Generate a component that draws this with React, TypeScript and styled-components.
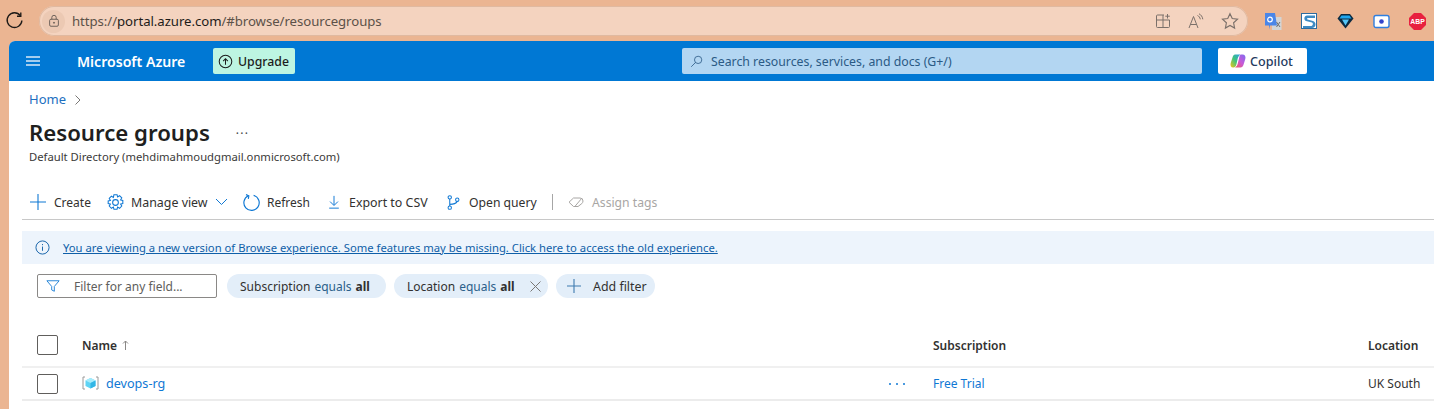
import React from "react";
import styled, { createGlobalStyle } from "styled-components";

const Global = createGlobalStyle`
  html, body { margin: 0; padding: 0; background: #ebb592; overflow: hidden; }
  body { font-family: "Noto Sans", "Open Sans", "Liberation Sans", sans-serif; width: 1434px; height: 409px; }
  * { box-sizing: border-box; }
`;

const Page = styled.div`
  width: 1434px;
  height: 409px;
  overflow: hidden;
  display: flex;
  flex-direction: column;
`;
const BrowserBar = styled.div`
  height: 41px;
  flex: none;
  display: flex;
  align-items: flex-start;
  padding: 6px 0 0 5px;
`;
const Reload = styled.div`
  width: 19px;
  height: 19px;
  margin: 5px 15px 0 0;
  display: flex;
`;
const AddressBar = styled.div`
  width: 1209px;
  height: 30px;
  border-radius: 15px;
  background: #f4d3bf;
  box-shadow: 0 0 0 1px #e0b9a0 inset;
  display: flex;
  align-items: center;
  padding: 0 9px 0 3px;
`;
const LockWrap = styled.div`
  width: 23px;
  height: 23px;
  border-radius: 50%;
  background: #ecc9b3;
  display: flex;
  align-items: center;
  justify-content: center;
  margin-right: 7px;
`;
const Url = styled.div`
  font-size: 13.2px;
  color: #5c5148;
  flex: 1;
  letter-spacing: -0.05px;
  white-space: nowrap;
  b { font-weight: 400; color: #1d1b19; }
`;
const BarIcons = styled.div`
  display: flex;
  align-items: center;
  gap: 17px;
`;
const Extensions = styled.div`
  display: flex;
  align-items: center;
  margin-left: 17px;
  gap: 19px;
  height: 30px;
`;
const Ext = styled.div`
  width: 17px;
  height: 17px;
  display: flex;
  align-items: center;
  justify-content: center;
`;
const Win = styled.div`
  flex: 1;
  margin-left: 9px;
  background: #fff;
  border-top-left-radius: 6px;
  overflow: hidden;
  display: flex;
  flex-direction: column;
`;
const Header = styled.header`
  height: 40px;
  flex: none;
  background: #0078d4;
  display: flex;
  align-items: center;
  padding-left: 17px;
`;
const Burger = styled.div`
  width: 14px;
  height: 10px;
  border-top: 2px solid #a4cdee;
  border-bottom: 2px solid #a4cdee;
  margin-right: 37px;
  &::after {
    content: "";
    display: block;
    height: 2px;
    margin-top: 2px;
    background: #a4cdee;
  }
`;
const Brand = styled.div`
  color: #fff;
  font-size: 14.1px;
  font-weight: 600;
  width: 136px;
  white-space: nowrap;
`;
const Upgrade = styled.div`
  width: 82px;
  height: 26px;
  background: #bdf5e2;
  border-radius: 2px;
  display: flex;
  align-items: center;
  gap: 5px;
  padding-left: 5px;
  font-size: 12.3px;
  font-weight: 500;
  color: #1c1c1c;
`;
const Search = styled.div`
  width: 520px;
  height: 26px;
  margin-left: 387px;
  background: #b3d6f2;
  border-radius: 2px;
  display: flex;
  align-items: center;
  gap: 8px;
  padding-left: 8px;
  font-size: 12.3px;
  color: #2b5a85;
  white-space: nowrap;
`;
const Copilot = styled.div`
  width: 89px;
  height: 26px;
  margin-left: 16px;
  padding-right: 2px;
  background: #fff;
  border-radius: 2px;
  display: flex;
  align-items: center;
  justify-content: center;
  gap: 4px;
  font-size: 12.6px;
  font-weight: 500;
  color: #243a5e;
`;
const Content = styled.main`
  flex: 1;
  padding-left: 13px;
  display: flex;
  flex-direction: column;
`;
const Crumb = styled.div`
  height: 35px;
  padding: 9px 0 0 7px;
  display: flex;
  align-items: flex-start;
  gap: 8px;
  font-size: 13px;
  color: #1d6fbf;
`;
const Title = styled.h1`
  margin: 0;
  padding-left: 7px;
  height: 33px;
  display: flex;
  align-items: center;
  font-size: 22.2px;
  line-height: 33px;
  font-weight: 600;
  color: #201f1e;
  white-space: nowrap;
`;
const TitleMore = styled.span`
  margin-left: 26px;
  font-size: 12px;
  font-weight: 400;
  letter-spacing: 1.2px;
  color: #444;
  position: relative;
  top: 1px;
`;
const Sub = styled.div`
  margin-top: 1px;
  padding-left: 7px;
  height: 17px;
  font-size: 11.25px;
  line-height: 14px;
  color: #3b3a39;
  white-space: nowrap;
`;
const Toolbar = styled.div`
  margin-top: 19px;
  height: 34px;
  border-bottom: 1px solid #c8c8c8;
  display: flex;
  align-items: center;
  padding: 0 0 1px 8px;
  color: #323130;
  white-space: nowrap;
`;
const Tool = styled.div<{ $w: number; $gap?: number; $off?: boolean; $size?: number }>`
  width: ${(p) => p.$w}px;
  flex: none;
  display: flex;
  align-items: center;
  font-size: ${(p) => p.$size ?? 12}px;
  gap: ${(p) => p.$gap ?? 8}px;
  color: ${(p) => (p.$off ? "#a8a6a4" : "#323130")};
`;
const Divider = styled.div`
  width: 1px;
  height: 16px;
  background: #a6a6a6;
  margin-right: 15px;
`;
const Banner = styled.div`
  margin-top: 11px;
  height: 33px;
  background: #edf4fc;
  display: flex;
  align-items: center;
  gap: 13px;
  padding-left: 13px;
  font-size: 11.25px;
  white-space: nowrap;
  a { color: #0f5fa8; text-decoration: underline; }
`;
const FilterRow = styled.div`
  margin-top: 10px;
  height: 24px;
  display: flex;
  align-items: center;
  padding-left: 15px;
`;
const FilterInput = styled.div`
  width: 180px;
  height: 24px;
  border: 1px solid #8a8886;
  border-radius: 2px;
  display: flex;
  align-items: center;
  gap: 14px;
  padding-left: 8px;
  font-size: 12px;
  color: #605e5c;
  margin-right: 10px;
  white-space: nowrap;
`;
const Pill = styled.div<{ $w: number; $size?: number }>`
  width: ${(p) => p.$w}px;
  height: 24px;
  margin-right: 8px;
  border-radius: 12px;
  background: #e3eef9;
  display: flex;
  align-items: center;
  padding-left: 13px;
  font-size: ${(p) => p.$size ?? 12}px;
  color: #323130;
  white-space: nowrap;
  em { font-style: normal; color: #2b5f8a; margin: 0 4px; }
  b { font-weight: 700; }
`;
const PillClose = styled.span`
  margin-left: 15px;
  display: flex;
`;
const Grid = styled.div`
  display: grid;
  grid-template-columns: 45px 851px 435px 1fr;
  align-items: center;
  padding-left: 15px;
  white-space: nowrap;
`;
const HeadRow = styled(Grid)`
  margin-top: 26px;
  height: 44px;
  border-bottom: 2px solid #f0f0f0;
  font-size: 12px;
  font-weight: 600;
  color: #323130;
`;
const DataRow = styled(Grid)`
  height: 33px;
  border-bottom: 2px solid #ececec;
  font-size: 12px;
  color: #323130;
`;
const Check = styled.div`
  width: 21px;
  height: 20px;
  border: 1px solid #605e5c;
  border-radius: 2px;
`;
const NameHead = styled.div`
  display: flex;
  align-items: center;
  gap: 5px;
`;
const NameCell = styled.div`
  display: flex;
  align-items: center;
  justify-content: space-between;
  padding-right: 28px;
`;
const RowLink = styled.a<{ $size?: number }>`
  color: #0f78d4;
  font-size: ${(p) => p.$size ?? 12}px;
  display: flex;
  align-items: center;
  gap: 7px;
`;
const RowMore = styled.span`
  display: flex;
  gap: 5px;
  i { width: 2px; height: 2px; background: #0f78d4; display: block; border-radius: 50%; }
`;

const Svg = (p: { w: number; h?: number; c: string; sw?: number; children: React.ReactNode }) => (
  <svg width={p.w} height={p.h ?? p.w} viewBox="0 0 16 16" fill="none" stroke={p.c} strokeWidth={p.sw ?? 1} style={{ flex: "none", display: "block" }}>
    {p.children}
  </svg>
);

export default function App() {
  return (
    <Page>
      <Global />
      <BrowserBar>
        <Reload>
          <Svg w={19} c="#1e1b18" sw={1.15}>
            <path d="M12.9 3.9A6.2 6.2 0 1 0 14.2 8" />
            <path d="M13.3 1.2v3.2h-3.2" />
          </Svg>
        </Reload>
        <AddressBar>
          <LockWrap>
            <Svg w={14} c="#5f5650">
              <rect x="3" y="6" width="10" height="8" rx="1.5" />
              <path d="M5.5 6V4a2.500 2.500 0 0 1 5 0v2" />
              <circle cx="8" cy="10" r="0.6" fill="#5f5650" />
            </Svg>
          </LockWrap>
          <Url>
            https://<b>portal.azure.com</b>/#browse/resourcegroups
          </Url>
          <BarIcons>
            <Svg w={16} c="#7b706a">
              <path d="M9 2H2.500a1 1 0 0 0-1 1v10.500a1 1 0 0 0 1 1h11a1 1 0 0 0 1-1V7H1.500M8 2v12.500" />
              <path d="M12.500 1v4.500M10.300 3.200h4.500" />
            </Svg>
            <Svg w={16} c="#7b706a">
              <path d="M1 15 5.500 3.500 10 15M2.500 11.500h6" />
              <path d="M9.500 2.500c1.500.6 2.500 2 2.800 3.800M11 .8c2 .9 3.500 3 3.800 5.500" />
            </Svg>
            <Svg w={18} c="#7b706a">
              <path d="m8 1.500 2 4.300 4.700.6-3.500 3.200.9 4.700L8 12l-4.100 2.300.9-4.700L1.300 6.400 6 5.800z" />
            </Svg>
          </BarIcons>
        </AddressBar>
        <Extensions>
          <Ext>
            <svg width="17" height="17" viewBox="0 0 17 17" style={{ display: "block" }}>
              <rect x="7" y="4" width="9.500" height="13" fill="#d3d5d6" />
              <path d="M0 0h10l2 12.500H5v4l-1-4H0z" fill="#4a86e8" />
              <circle cx="5" cy="6.500" r="2.300" fill="none" stroke="#fff" strokeWidth="1.200" />
              <path d="m11.500 9 3.500 5M15 9l-3.500 5" stroke="#6b7074" strokeWidth="1" />
            </svg>
          </Ext>
          <Ext>
            <svg width="17" height="17" viewBox="0 0 17 17" style={{ display: "block" }}>
              <rect width="16" height="16" fill="#2d6c9f" />
              <rect x="1" y="1" width="14" height="14" fill="#fff" />
              <path d="M14 2.500H6C3 2.500 2.500 7 5 8l6 1.500c1.500.5 1 3-.5 3.500H2V15h9c4 0 5-5.500 1-7L6.500 6.500c-1-.5-.5-1.500.5-1.500h7z" fill="#3d8bc4" />
            </svg>
          </Ext>
          <Ext>
            <svg width="17" height="17" viewBox="0 0 17 17" style={{ display: "block" }}>
              <path d="M4 1h9l3.500 4.500L8.500 15.500.5 5.500z" fill="#0c2a40" />
              <path d="M4.500 2.500h8l2 3H2.500z" fill="#1ea7f0" />
              <path d="M5 6.500h7l-3.500 6z" fill="#54c5f8" />
            </svg>
          </Ext>
          <Ext>
            <svg width="17" height="17" viewBox="0 0 17 17" style={{ display: "block" }}>
              <rect x="1" y="2.500" width="15" height="12" rx="2" fill="#fff" stroke="#2f7fe0" strokeWidth="1.400" />
              <circle cx="8.500" cy="8.500" r="2.300" fill="#3344cc" />
            </svg>
          </Ext>
          <Ext>
            <svg width="17" height="17" viewBox="0 0 17 17" style={{ display: "block" }}>
              <path d="M5 0h7l5 5v7l-5 5H5l-5-5V5z" fill="#e8213f" />
              <text x="8.500" y="11" textAnchor="middle" fontFamily="Liberation Sans, sans-serif" fontWeight="700" fontSize="6.800" fill="#fff">ABP</text>
            </svg>
          </Ext>
        </Extensions>
      </BrowserBar>
      <Win>
        <Header>
          <Burger />
          <Brand>Microsoft Azure</Brand>
          <Upgrade>
            <Svg w={15} c="#1c1c1c" sw={1.1}>
              <circle cx="8" cy="8" r="6.700" />
              <path d="M8 11.500V5M5.500 7.500 8 5l2.500 2.500" />
            </Svg>
            Upgrade
          </Upgrade>
          <Search>
            <Svg w={13} c="#2b5a85">
              <circle cx="10" cy="6" r="4.500" />
              <path d="M6.800 9.200 1.500 14.500" />
            </Svg>
            Search resources, services, and docs (G+/)
          </Search>
          <Copilot>
            <svg width="16" height="16" viewBox="0 0 16 16" style={{ flex: "none", display: "block" }}>
              <defs>
                <linearGradient id="cpa" x1="0" y1="1" x2="1" y2="0">
                  <stop offset="0" stopColor="#f5c518" />
                  <stop offset="0.5" stopColor="#3fc47a" />
                  <stop offset="1" stopColor="#2f9bea" />
                </linearGradient>
                <linearGradient id="cpb" x1="0" y1="1" x2="1" y2="0">
                  <stop offset="0" stopColor="#ef5a5a" />
                  <stop offset="0.5" stopColor="#c85ad8" />
                  <stop offset="1" stopColor="#7a6cf0" />
                </linearGradient>
              </defs>
              <path d="M5 1.500h5.500c-2 1-2.500 3-3 5L6.500 11c-.5 2-1.500 3.500-3 3.500H3c-2 0-3-2-2.300-4.500L2.500 4.500C3 2.500 4 1.500 5 1.500z" fill="url(#cpa)" />
              <path d="M11 1.500h1.500c2.300 0 3.500 2 2.800 4.500l-1.700 5.500c-.6 2-1.600 3-3.100 3H5c2 -1 2.500 -3 3 -5l1.200-5c.4-1.800 .8-3 1.800-3z" fill="url(#cpb)" />
            </svg>
            Copilot
          </Copilot>
        </Header>
        <Content>
          <Crumb>
            Home
            <svg width="8" height="12" viewBox="0 0 8 12" fill="none" stroke="#797775" style={{ marginTop: 4 }}>
              <path d="m1.500 1.500 4.500 4.500-4.500 4.500" />
            </svg>
          </Crumb>
          <Title>
            Resource groups<TitleMore>···</TitleMore>
          </Title>
          <Sub>Default Directory (mehdimahmoudgmail.onmicrosoft.com)</Sub>
          <Toolbar>
            <Tool $w={77}>
              <Svg w={16} c="#0f78d4" sw={1.1}>
                <path d="M8 0v16M0 8h16" />
              </Svg>
              Create
            </Tool>
            <Tool $w={136} $gap={7} $size={12.4}>
              <svg width="17" height="17" viewBox="1.500 1.500 13 13" fill="none" stroke="#0f78d4" strokeWidth="0.800" style={{ flex: "none", display: "block" }}>
                <circle cx="8" cy="8" r="2.200" />
                <path d="M6.800 2h2.400l.4 1.700 1.500-.9 1.700 1.700-.9 1.500 1.700.4v2.400l-1.700.4.9 1.500-1.700 1.700-1.500-.9-.4 1.700H6.800l-.4-1.700-1.500.9-1.700-1.700.9-1.500-1.700-.4V6.800l1.700-.4-.9-1.500 1.700-1.700 1.500.9z" />
              </svg>
              Manage view
              <svg width="13" height="8" viewBox="0 0 13 8" fill="none" stroke="#0f78d4">
                <path d="m1 1 5.500 5.500L12 1" />
              </svg>
            </Tool>
            <Tool $w={84} $gap={7}>
              <Svg w={17} c="#0f78d4" sw={1.1}>
                <path d="M10 1.300A7.200 7.200 0 1 1 5 1.700" />
                <path d="M2.800 0.600 5.500 1.700 5 4.500" />
              </Svg>
              Refresh
            </Tool>
            <Tool $w={119} $gap={8} $size={12.4}>
              <Svg w={14} c="#0f78d4" sw={1.1}>
                <path d="M8 1v10.500M3.500 7.500 8 12l4.500-4.500M2.500 15h11" />
              </Svg>
              Export to CSV
            </Tool>
            <Tool $w={106} $size={12.2}>
              <Svg w={15} c="#0f78d4" sw={1.100}>
                <circle cx="4" cy="2.500" r="1.800" />
                <circle cx="4" cy="13.500" r="1.800" />
                <circle cx="12" cy="5" r="1.800" />
                <path d="M4 4.300v7.400M4 10c3 0 6.500-.5 8-3.200" />
              </Svg>
              Open query
            </Tool>
            <Divider />
            <Tool $w={110} $off $size={12.2}>
              <Svg w={16} c="#a8a6a4">
                <path d="M5.500 4H12a3 3 0 0 1 3 3c0 1-.5 2-1.200 2.600L10 12.500H5.500L1 8.200z" />
                <path d="M14 4 7 12.300" />
              </Svg>
              Assign tags
            </Tool>
          </Toolbar>
          <Banner>
            <Svg w={15} c="#0f5fa8">
              <circle cx="8" cy="8" r="7" />
              <path d="M8 7v4.500M8 4.300v1.200" />
            </Svg>
            <a>You are viewing a new version of Browse experience. Some features may be missing. Click here to access the old experience.</a>
          </Banner>
          <FilterRow>
            <FilterInput>
              <Svg w={14} c="#0f78d4">
                <path d="M1 2h14L9.500 8.500V14l-3-1.500v-4z" />
              </Svg>
              Filter for any field...
            </FilterInput>
            <Pill $w={159}>
              Subscription<em>equals</em>
              <b>all</b>
            </Pill>
            <Pill $w={154}>
              Location<em>equals</em>
              <b>all</b>
              <PillClose>
                <svg width="11" height="11" viewBox="0 0 11 11" fill="none" stroke="#797775">
                  <path d="m.5.5 10 10M10.500.5l-10 10" />
                </svg>
              </PillClose>
            </Pill>
            <Pill $w={99} $size={12.4}>
              <svg width="14" height="14" viewBox="0 0 14 14" fill="none" stroke="#3f7bb0" strokeWidth="1.100" style={{ marginLeft: -2, marginRight: 12 }}>
                <path d="M7 0v14M0 7h14" />
              </svg>
              Add filter
            </Pill>
          </FilterRow>
          <HeadRow>
            <Check />
            <NameHead>
              Name
              <svg width="7" height="10" viewBox="0 0 7 10" fill="none" stroke="#8a8886">
                <path d="M3.500 10V1M1 3.500 3.500 1 6 3.500" />
              </svg>
            </NameHead>
            <div>Subscription</div>
            <div>Location</div>
          </HeadRow>
          <DataRow>
            <Check />
            <NameCell>
              <RowLink $size={12.6}>
                <svg width="17" height="17" viewBox="0 0 17 17" fill="none">
                  <path d="M3 2H1v12h2M14 2h2v12h-2" stroke="#9a9a9a" />
                  <path d="m8.500 3 5 2.500v5.500l-5 2.500-5-2.500V5.500z" fill="#5fd4f5" />
                  <path d="m3.500 5.500 5 2.500 5-2.500-5-2.500z" fill="#a6ecfc" />
                  <path d="M8.500 8v5.500l5-2.500V5.500z" fill="#32b5e5" />
                </svg>
                devops-rg
              </RowLink>
              <RowMore>
                <i />
                <i />
                <i />
              </RowMore>
            </NameCell>
            <RowLink>Free Trial</RowLink>
            <div>UK South</div>
          </DataRow>
        </Content>
      </Win>
    </Page>
  );
}
